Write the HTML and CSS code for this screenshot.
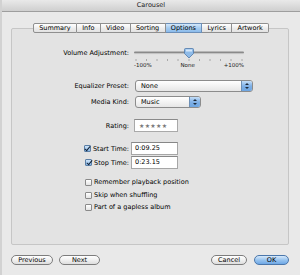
FILE: index.html
```html
<!DOCTYPE html>
<html lang="en">

<head>
    <meta charset="UTF-8">
    <title>Carousel</title>
    <link rel="stylesheet" href="styles.css">
</head>

<body>
    <div class="window">
        <div class="titlebar">Carousel</div>

        <div class="content">
            <div class="tabs">
                <span class="tab">Summary</span>
                <span class="tab">Info</span>
                <span class="tab">Video</span>
                <span class="tab">Sorting</span>
                <span class="tab selected">Options</span>
                <span class="tab">Lyrics</span>
                <span class="tab">Artwork</span>
            </div>

            <div class="panel">
                <div class="field field-volume">
                    <span class="label">Volume Adjustment:</span>
                    <div class="slider">
                        <svg width="112" height="12" viewBox="0 0 112 12">
                            <rect x="1" y="4.5" width="110" height="2" rx="1" fill="#8a8a8a"/>
                            <rect x="1" y="6.5" width="110" height="0.6" fill="#d0d0d0"/>
                            <path d="M52.5 1.5 h7 a1 1 0 0 1 1 1 v4 l-4.5 4.5 l-4.5 -4.5 v-4 a1 1 0 0 1 1 -1 z" fill="#8fbbe8" stroke="#4f79a8" stroke-width="0.8"/>
                            <path d="M53 2.5 h6 v2 h-6 z" fill="#d6e8fa"/>
                        </svg>
                        <svg class="ticks" width="112" height="3" viewBox="0 0 112 3">
                            <g stroke="#9a9a9a" stroke-width="0.8">
                                <line x1="3" y1="0" x2="3" y2="2"/>
                                <line x1="13.5" y1="0" x2="13.5" y2="2"/>
                                <line x1="24" y1="0" x2="24" y2="2"/>
                                <line x1="34.5" y1="0" x2="34.5" y2="2"/>
                                <line x1="45" y1="0" x2="45" y2="2"/>
                                <line x1="56" y1="0" x2="56" y2="2"/>
                                <line x1="66.5" y1="0" x2="66.5" y2="2"/>
                                <line x1="77" y1="0" x2="77" y2="2"/>
                                <line x1="87.5" y1="0" x2="87.5" y2="2"/>
                                <line x1="98" y1="0" x2="98" y2="2"/>
                                <line x1="109" y1="0" x2="109" y2="2"/>
                            </g>
                        </svg>
                        <div class="scale">
                            <span>-100%</span>
                            <span>None</span>
                            <span>+100%</span>
                        </div>
                    </div>
                </div>

                <div class="field field-eq">
                    <span class="label">Equalizer Preset:</span>
                    <div class="popup popup-wide">
                        <span class="popup-text">None</span>
                        <span class="stepper"></span>
                    </div>
                </div>

                <div class="field field-kind">
                    <span class="label">Media Kind:</span>
                    <div class="popup popup-narrow">
                        <span class="popup-text">Music</span>
                        <span class="stepper"></span>
                    </div>
                </div>

                <div class="field field-rating">
                    <span class="label">Rating:</span>
                    <div class="rating">★★★★★</div>
                </div>

                <div class="field field-start">
                    <span class="label">
                        <span class="check checked"></span>
                        Start Time:
                    </span>
                    <div class="textbox">0:09.25</div>
                </div>

                <div class="field field-stop">
                    <span class="label">
                        <span class="check checked"></span>
                        Stop Time:
                    </span>
                    <div class="textbox">0:23.15</div>
                </div>

                <div class="option option-first"><span class="check"></span>Remember playback position</div>
                <div class="option"><span class="check"></span>Skip when shuffling</div>
                <div class="option option-last"><span class="check"></span>Part of a gapless album</div>
            </div>

            <div class="buttons">
                <div class="button-group">
                    <span class="btn btn-prev">Previous</span>
                    <span class="btn btn-next">Next</span>
                </div>
                <div class="button-group">
                    <span class="btn btn-cancel">Cancel</span>
                    <span class="btn btn-ok">OK</span>
                </div>
            </div>
        </div>
    </div>
</body>

</html>
```

FILE: styles.css
```css
body {
    margin: 0;
    padding: 0;
    font-family: "DejaVu Sans", "Lucida Grande", sans-serif;
    font-size: 6.5px;
    color: #000;
}

.window {
    width: 300px;
    height: 275px;
    box-sizing: border-box;
    overflow: hidden;
    background-color: #e9e9e9;
    border-left: 2px solid #d2d2d2;
}

.titlebar {
    height: 11px;
    line-height: 11px;
    text-align: center;
    color: #222;
    background: linear-gradient(#e9e9e9, #cfcfcf);
    border-bottom: 1px solid #9e9e9e;
}

.content {
    padding: 11px 11px 0 9px;
}

/* tab strip sits over the top border of the panel */
.tabs {
    position: relative;
    z-index: 1;
    display: flex;
    justify-content: center;
    height: 10px;
    margin: 0 0 -5px 2px;
}

.tab {
    padding: 0 5.3px;
    line-height: 9px;
    background: linear-gradient(#ffffff, #ececec 55%, #e2e2e2);
    border: 1px solid #8f8f8f;
    border-left: none;
}

.tab:first-child {
    border-left: 1px solid #8f8f8f;
    border-radius: 2px 0 0 2px;
}

.tab:last-child {
    border-radius: 0 2px 2px 0;
}

.tab.selected {
    background: linear-gradient(#d4e8fb, #a4cbf0 50%, #8bbbeb);
    border-color: #6c8fb8;
}

.panel {
    height: 217px;
    box-sizing: border-box;
    padding-top: 18px;
    background-color: #e3e3e3;
    border: 1px solid #c6c6c6;
    border-radius: 2px;
}

.field {
    display: grid;
    grid-template-columns: 117px 1fr;
    column-gap: 2px;
    align-items: center;
}

.label {
    display: flex;
    align-items: center;
    justify-content: flex-end;
    gap: 2px;
    white-space: nowrap;
}

.field-volume {
    align-items: start;
}

.field-volume .label {
    line-height: 12px;
}

.slider {
    width: 112px;
    margin-left: 2px;
}

.slider svg {
    display: block;
}

.scale {
    display: flex;
    justify-content: space-between;
    font-size: 5.5px;
    line-height: 7px;
    color: #222;
    padding-left: 1px;
    padding-right: 1px;
}

.field-eq {
    margin-top: 11px;
    height: 12px;
}

.field-kind {
    margin-top: 4px;
    height: 12px;
}

.popup {
    display: flex;
    height: 12px;
    box-sizing: border-box;
    margin-left: 4px;
    border: 1px solid #8c8c8c;
    border-radius: 3px;
    background: linear-gradient(#ffffff, #f3f3f3 50%, #e6e6e6);
    overflow: hidden;
}

.popup-wide {
    width: 118px;
}

.popup-narrow {
    width: 66px;
}

.popup-text {
    flex: 1;
    padding-left: 5px;
    line-height: 10px;
}

.stepper {
    position: relative;
    width: 10px;
    background: linear-gradient(#c4def8, #7fb0e6 50%, #6ea6e2);
    border-left: 1px solid #6d8fb5;
}

.stepper::before,
.stepper::after {
    content: "";
    position: absolute;
    left: 3px;
    border-left: 2px solid transparent;
    border-right: 2px solid transparent;
}

.stepper::before {
    top: 2px;
    border-bottom: 2px solid #1d2a3a;
}

.stepper::after {
    bottom: 2px;
    border-top: 2px solid #1d2a3a;
}

.field-rating {
    margin-top: 11px;
    height: 13px;
}

.rating {
    width: 44px;
    height: 13px;
    box-sizing: border-box;
    margin-left: 3px;
    padding-left: 4px;
    line-height: 12px;
    font-size: 6px;
    letter-spacing: 0.3px;
    color: #7a7a7a;
    background-color: #fff;
    border: 1px solid #a9a9a9;
    border-top-color: #8a8a8a;
}

.field-start {
    margin-top: 10px;
    height: 13px;
}

.field-stop {
    margin-top: 1px;
    height: 13px;
}

.textbox {
    width: 47px;
    height: 13px;
    box-sizing: border-box;
    padding-left: 3px;
    line-height: 11px;
    background-color: #fff;
    border: 1px solid #a6a6a6;
    border-top-color: #878787;
}

.check {
    display: inline-block;
    width: 7px;
    height: 7px;
    box-sizing: border-box;
    border: 1px solid #8a8a8a;
    border-radius: 1px;
    background: linear-gradient(#ffffff, #e4e4e4);
}

.check.checked {
    position: relative;
    border-color: #5b7fa6;
    background: linear-gradient(#cfe4f8, #86b7e8);
}

.check.checked::after {
    content: "";
    position: absolute;
    left: 1.5px;
    top: -1.5px;
    width: 2px;
    height: 5px;
    border-right: 1.3px solid #152235;
    border-bottom: 1.3px solid #152235;
    transform: rotate(40deg);
}

.option {
    display: flex;
    align-items: center;
    gap: 2px;
    height: 12px;
    margin-top: 1px;
    padding-left: 73px;
}

.option-first {
    margin-top: 7px;
}

.option-last {
    margin-top: 0;
}

.buttons {
    display: flex;
    justify-content: space-between;
    margin-top: 10px;
}

.button-group {
    display: flex;
    gap: 6px;
}

.button-group + .button-group {
    gap: 7px;
}

.btn {
    height: 10px;
    box-sizing: border-box;
    line-height: 8px;
    text-align: center;
    border: 1px solid #7d7d7d;
    border-radius: 5px;
    background: linear-gradient(#ffffff, #f0f0f0 50%, #dedede);
}

.btn-prev {
    width: 42px;
}

.btn-next {
    width: 41px;
}

.btn-cancel {
    width: 36px;
}

.btn-ok {
    width: 35px;
    border-color: #4b77ab;
    background: linear-gradient(#d7e9fb, #98c4ef 50%, #6fa8e6);
}
```
